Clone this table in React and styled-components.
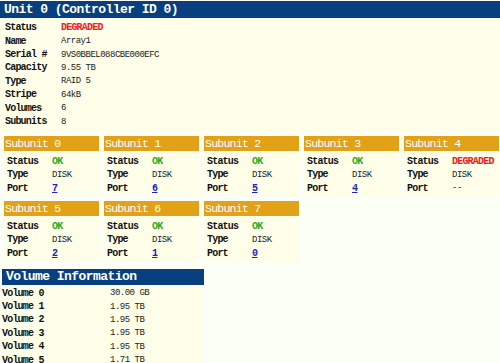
import React from "react";
import styled, { createGlobalStyle } from "styled-components";

const unit = [
    ["Status", "DEGRADED", "bad"],
    ["Name", "Array1"],
    ["Serial #", "9VS0BBEL088CBE000EFC"],
    ["Capacity", "9.55 TB"],
    ["Type", "RAID 5"],
    ["Stripe", "64kB"],
    ["Volumes", "6"],
    ["Subunits", "8"],
];

const subunits = [
    { id: 0, status: "OK", port: "7" },
    { id: 1, status: "OK", port: "6" },
    { id: 2, status: "OK", port: "5" },
    { id: 3, status: "OK", port: "4" },
    { id: 4, status: "DEGRADED", port: null },
    { id: 5, status: "OK", port: "2" },
    { id: 6, status: "OK", port: "1" },
    { id: 7, status: "OK", port: "0" },
];

const volumes = ["30.00 GB", "1.95 TB", "1.95 TB", "1.95 TB", "1.95 TB", "1.71 TB"];

const Global = createGlobalStyle`
    body {
        margin: 0;
        background: #fcfff6;
        font-family: "Liberation Mono", "DejaVu Sans Mono", monospace;
        color: #111;
    }
`;

const Page = styled.div`
    padding-top: 1px;
`;

const BlueHead = styled.div`
    background: #073f7f;
    color: #fff;
    font-size: 13px;
    font-weight: bold;
    letter-spacing: -0.55px;
    height: ${(p) => p.$h}px;
    line-height: ${(p) => p.$h}px;
    padding-left: 4px;
    box-sizing: border-box;
`;

const InfoBox = styled.div`
    background: #ffffe9;
    padding: 3px 0 3px 5px;
    display: grid;
    grid-template-columns: 56px 1fr;
    grid-auto-rows: 13.43px;
    align-items: center;
`;

const Label = styled.div`
    font-size: 10px;
    font-weight: bold;
    letter-spacing: -0.8px;
    white-space: nowrap;
`;

const Value = styled.div`
    white-space: nowrap;
    color: ${(p) => (p.$tone === "bad" ? "#ee2020" : p.$tone === "ok" ? "#1fa81f" : "#222")};
    font-weight: ${(p) => (p.$tone ? "bold" : "normal")};
    font-size: ${(p) => (p.$tone ? "10px" : "9px")};
    letter-spacing: ${(p) => (p.$tone ? "-0.8px" : "-0.5px")};
`;

const PortLink = styled.a`
    color: #2020cc;
    font-weight: bold;
    font-size: 10px;
    text-decoration: underline;
`;

const Grid = styled.div`
    display: grid;
    grid-template-columns: repeat(5, 95px);
    column-gap: 5px;
    row-gap: 5px;
    padding-left: 4px;
    margin-top: 5px;
`;

const Card = styled.div`
    background: #ffffe9;
    height: 60px;
`;

const CardHead = styled.div`
    background: #e2a117;
    color: #fff;
    height: 15px;
    line-height: 15px;
    padding-left: 1px;
    font-size: 11.5px;
    letter-spacing: -0.75px;
`;

const CardBody = styled.div`
    display: grid;
    grid-template-columns: 45px 1fr;
    grid-auto-rows: 13.5px;
    align-items: center;
    padding: 3px 0 0 3px;
`;

const VolumeTable = styled.div`
    width: 202px;
    margin: 8px 0 0 2px;
`;

const VolRows = styled.div`
    background: #ffffe9;
    display: grid;
    grid-template-columns: 108px 1fr;
    grid-auto-rows: 13.43px;
    align-items: center;
    padding-top: 1px;
`;

function SubunitCard({ s }) {
    return (
        <Card>
            <CardHead>Subunit {s.id}</CardHead>
            <CardBody>
                <Label>Status</Label>
                <Value $tone={s.status === "OK" ? "ok" : "bad"}>{s.status}</Value>
                <Label>Type</Label>
                <Value>DISK</Value>
                <Label>Port</Label>
                {s.port ? (
                    <Value>
                        <PortLink href="#">{s.port}</PortLink>
                    </Value>
                ) : (
                    <Value>--</Value>
                )}
            </CardBody>
        </Card>
    );
}

export default function App() {
    return (
        <Page>
            <Global />
            <BlueHead $h={17}>Unit 0 (Controller ID 0)</BlueHead>
            <InfoBox>
                {unit.map(([k, v, tone]) => (
                    <React.Fragment key={k}>
                        <Label>{k}</Label>
                        <Value $tone={tone}>{v}</Value>
                    </React.Fragment>
                ))}
            </InfoBox>
            <Grid>
                {subunits.map((s) => (
                    <SubunitCard key={s.id} s={s} />
                ))}
            </Grid>
            <VolumeTable>
                <BlueHead $h={16}>Volume Information</BlueHead>
                <VolRows>
                    {volumes.map((v, i) => (
                        <React.Fragment key={i}>
                            <Label>Volume {i}</Label>
                            <Value>{v}</Value>
                        </React.Fragment>
                    ))}
                </VolRows>
            </VolumeTable>
        </Page>
    );
}
